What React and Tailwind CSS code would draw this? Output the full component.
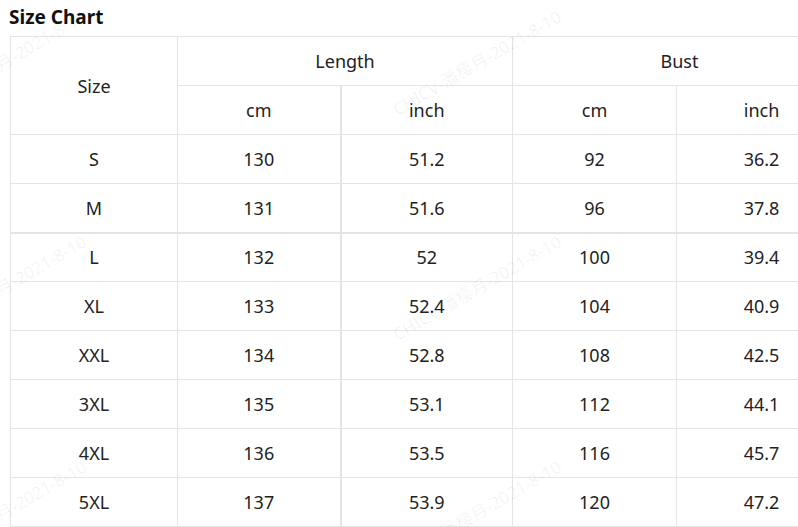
const rows = [
  ["S", "130", "51.2", "92", "36.2"],
  ["M", "131", "51.6", "96", "37.8"],
  ["L", "132", "52", "100", "39.4"],
  ["XL", "133", "52.4", "104", "40.9"],
  ["XXL", "134", "52.8", "108", "42.5"],
  ["3XL", "135", "53.1", "112", "44.1"],
  ["4XL", "136", "53.5", "116", "45.7"],
  ["5XL", "137", "53.9", "120", "47.2"],
];

const marks = [
  "left-[2px] top-[63px]",
  "left-[2px] top-[288px]",
  "left-[2px] top-[513px]",
  "left-[477px] top-[63px]",
  "left-[477px] top-[288px]",
  "left-[477px] top-[513px]",
];

const cell = "h-[49px] border border-[#e4e4e4] p-0 text-center align-middle font-normal";

export default function App() {
  return (
    <div
      className="relative h-[527px] w-[798px] overflow-hidden bg-white text-[#222]"
      style={{ fontFamily: '"Noto Sans", "Noto Sans CJK SC", sans-serif' }}
    >
      <h2 className="pl-[9px] pt-[4px] text-[19px] font-bold leading-[26px] text-[#111]">Size Chart</h2>
      <table className="ml-[10px] mt-[6px] w-[836px] table-fixed border-collapse text-[18px] leading-[24px]">
        <colgroup>
          <col className="w-[167px]" />
          <col className="w-[163px]" />
          <col className="w-[172px]" />
          <col className="w-[164px]" />
          <col className="w-[170px]" />
        </colgroup>
        <thead>
          <tr>
            <th rowSpan={2} className={cell}>Size</th>
            <th colSpan={2} className={cell}>Length</th>
            <th colSpan={2} className={cell}>Bust</th>
          </tr>
          <tr>
            <th className={cell}>cm</th>
            <th className={cell + " border-l-2"}>inch</th>
            <th className={cell}>cm</th>
            <th className={cell}>inch</th>
          </tr>
        </thead>
        <tbody>
          {rows.map((r, i) => (
            <tr key={r[0]} className={i === 1 ? "border-b-2 border-[#e4e4e4]" : ""}>
              {r.map((v, j) => (
                <td key={j} className={cell + (j === 2 ? " border-l-2" : "") + (i === 1 ? " border-b-2" : "")}>
                  {v}
                </td>
              ))}
            </tr>
          ))}
        </tbody>
      </table>
      {marks.map((m) => (
        <div
          key={m}
          className={`pointer-events-none absolute ${m} -translate-x-1/2 -translate-y-1/2 -rotate-30 whitespace-nowrap text-[17px] text-[#000]/[0.06]`}
        >
          CHICV-潘樱月-2021-8-10
        </div>
      ))}
    </div>
  );
}
